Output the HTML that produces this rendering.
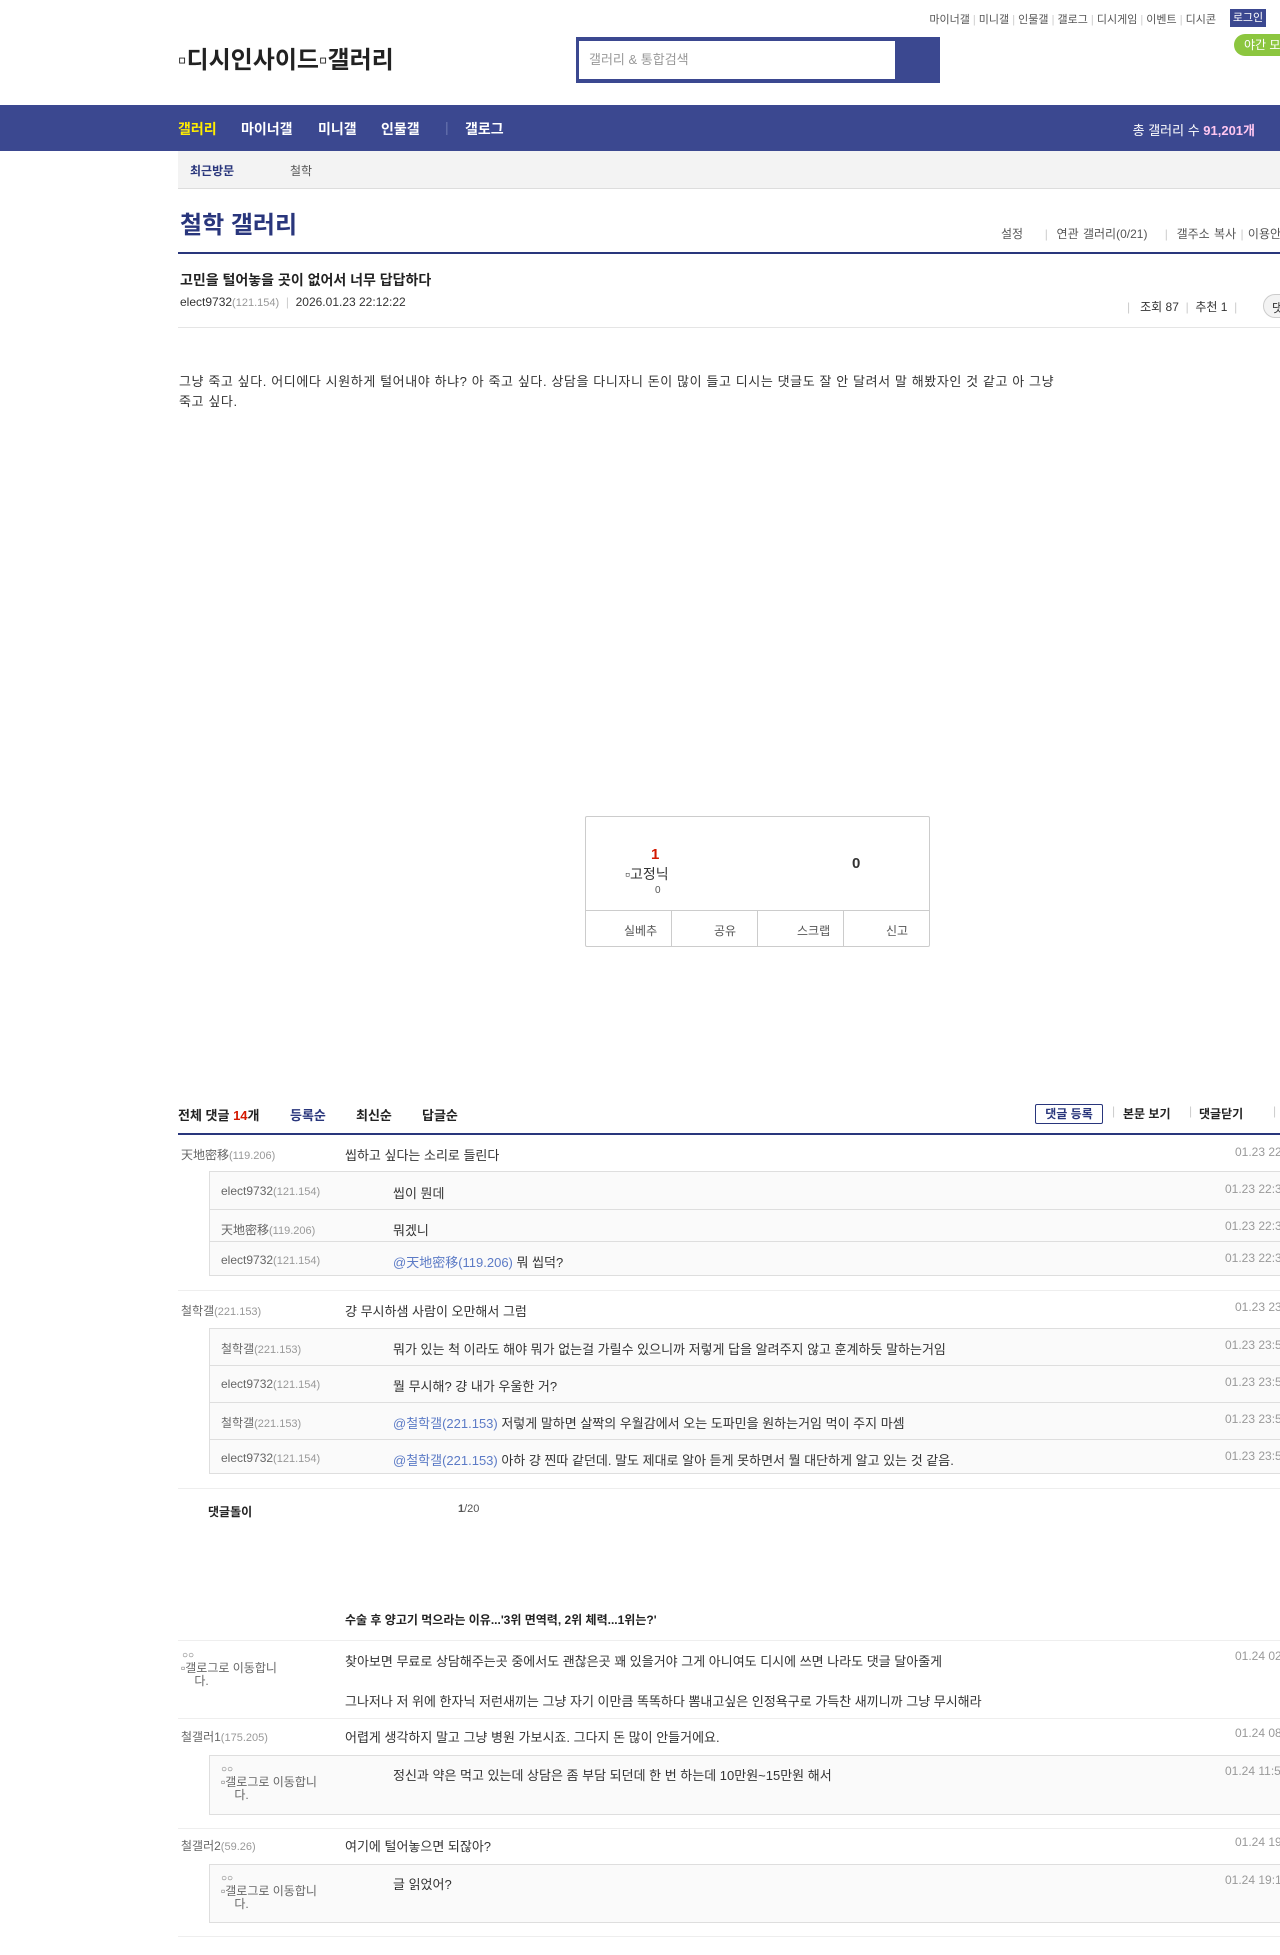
<!DOCTYPE html>
<html><head><meta charset="utf-8">
<style>
*{margin:0;padding:0;box-sizing:border-box}
body{width:1280px;height:1955px;overflow:hidden;background:#fff;font-family:"Liberation Sans","Noto Sans CJK KR",sans-serif;color:#333;position:relative;font-size:13px}
.a{position:absolute;white-space:nowrap}
.g{color:#999;font-size:11px}
.nm{color:#666;font-size:12px}
.dt{color:#999;font-size:12px}
.hl{position:absolute;height:1px;background:#e5e5e5}
.rb{position:absolute;left:209px;width:1080px;background:#fafafa;border:1px solid #dedede;border-right:none}
.rl{position:absolute;left:209px;width:1080px;height:1px;background:#dedede}
.lk{color:#5c7bc6}
.nv{position:absolute;top:119px;font-size:14px;font-weight:bold;color:#fff}
</style></head><body>
<div class="a" style="top:11px;right:64px;font-size:11px;color:#555">마이너갤 <span style="color:#ccc">|</span> 미니갤 <span style="color:#ccc">|</span> 인물갤 <span style="color:#ccc">|</span> 갤로그 <span style="color:#ccc">|</span> 디시게임 <span style="color:#ccc">|</span> 이벤트 <span style="color:#ccc">|</span> 디시콘</div>
<div class="a" style="left:1230px;top:9px;width:36px;height:18px;background:#3b4890;color:#fff;font-size:11px;text-align:center;line-height:18px">로그인</div>
<div class="a" style="left:1234px;top:34px;width:60px;height:22px;background:#8cc63f;border-radius:11px;color:#fff;font-size:12px;line-height:22px;padding-left:10px">야간 모드</div>
<div class="a" style="left:178px;top:40px;font-size:24px;color:#222;font-weight:bold">▫디시인사이드▫갤러리</div>
<div class="a" style="left:576px;top:37px;width:364px;height:46px;background:#3b4890"></div>
<div class="a" style="left:579px;top:41px;width:316px;height:38px;background:#fff;color:#999;font-size:13px;line-height:38px;padding-left:10px">갤러리 &amp; 통합검색</div>
<div class="a" style="left:0;top:105px;width:1280px;height:46px;background:#3b4890"></div>
<div class="nv" style="left:178px;color:#ffed00">갤러리</div>
<div class="nv" style="left:241px">마이너갤</div>
<div class="nv" style="left:318px">미니갤</div>
<div class="nv" style="left:381px">인물갤</div>
<div class="nv" style="left:445px;color:#6a76b0;font-weight:normal">|</div>
<div class="nv" style="left:465px">갤로그</div>
<div class="a" style="right:25px;top:120px;font-size:13px;color:#fff">총 갤러리 수 <b style="color:#ffc6f0">91,201개</b></div>
<div class="a" style="left:178px;top:151px;width:1102px;height:38px;background:#f3f3f3;border-bottom:1px solid #ddd"></div>
<div class="a" style="left:190px;top:162px;font-size:12px;color:#29367c;font-weight:bold">최근방문</div>
<div class="a" style="left:290px;top:162px;font-size:12px;color:#555">철학</div>
<div class="a" style="left:180px;top:205px;font-size:24px;font-weight:bold;color:#29367c">철학 갤러리</div>
<div class="a" style="left:1001px;top:225px;font-size:12px;color:#555;word-spacing:1px">설정&nbsp;&nbsp;&nbsp;&nbsp;&nbsp;<span style="color:#ccc">|</span>&nbsp; 연관 갤러리(0/21)&nbsp;&nbsp;&nbsp;&nbsp;<span style="color:#ccc">|</span>&nbsp; 갤주소 복사 <span style="color:#ccc">|</span> 이용안내</div>
<div class="a" style="left:178px;top:252px;width:1102px;height:2px;background:#29367c"></div>
<div class="a" style="left:180px;top:270px;font-size:14px;font-weight:bold;color:#222">고민을 털어놓을 곳이 없어서 너무 답답하다</div>
<div class="a" style="left:180px;top:295px;font-size:12px;color:#333">elect9732<span class="g">(121.154)</span> <span style="color:#ccc">&nbsp;|&nbsp;</span> 2026.01.23 22:12:22</div>
<div class="a" style="left:1127px;top:298px;font-size:12px;color:#333"><span style="color:#ccc">|</span>&nbsp;&nbsp; 조회 87 <span style="color:#ccc">&nbsp;|&nbsp;</span> 추천 1 <span style="color:#ccc">&nbsp;|</span></div>
<div class="a" style="left:1263px;top:294px;width:40px;height:24px;border:1px solid #ccc;border-radius:12px;background:#f3f3f3;font-size:12px;padding:4px 8px">댓</div>
<div class="hl" style="left:178px;top:327px;width:1102px"></div>
<div class="a" style="left:179px;top:372px;font-size:13px;line-height:20px;color:#333;letter-spacing:0.6px">그냥 죽고 싶다. 어디에다 시원하게 털어내야 하냐? 아 죽고 싶다. 상담을 다니자니 돈이 많이 들고 디시는 댓글도 잘 안 달려서 말 해봤자인 것 같고 아 그냥<br>죽고 싶다.</div>

<div class="a" style="left:585px;top:816px;width:345px;height:131px;border:1px solid #ccc;border-radius:2px"></div>
<div class="a" style="left:651px;top:846px;font-size:15px;font-weight:bold;color:#d31900">1</div>
<div class="a" style="left:625px;top:864px;font-size:14px;color:#333">▫고정닉</div>
<div class="a" style="left:655px;top:885px;font-size:10px;color:#555">0</div>
<div class="a" style="left:852px;top:855px;font-size:15px;font-weight:bold;color:#333">0</div>
<div class="a" style="left:586px;top:910px;width:343px;height:1px;background:#ccc"></div>
<div class="a" style="left:671px;top:911px;width:1px;height:36px;background:#ccc"></div>
<div class="a" style="left:757px;top:911px;width:1px;height:36px;background:#ccc"></div>
<div class="a" style="left:843px;top:911px;width:1px;height:36px;background:#ccc"></div>
<div class="a" style="left:624px;top:922px;font-size:12px;color:#555">실베추</div>
<div class="a" style="left:714px;top:922px;font-size:12px;color:#555">공유</div>
<div class="a" style="left:797px;top:922px;font-size:12px;color:#555">스크랩</div>
<div class="a" style="left:886px;top:922px;font-size:12px;color:#555">신고</div>

<div class="a" style="left:178px;top:1105px;font-size:13px;font-weight:bold;color:#222">전체 댓글 <span style="color:#d31900">14</span>개</div>
<div class="a" style="left:290px;top:1105px;font-size:13px;font-weight:bold;color:#29367c">등록순</div>
<div class="a" style="left:356px;top:1105px;font-size:13px;font-weight:bold;color:#222">최신순</div>
<div class="a" style="left:422px;top:1105px;font-size:13px;font-weight:bold;color:#222">답글순</div>
<div class="a" style="left:1035px;top:1104px;width:68px;height:20px;border:1px solid #29367c;border-radius:2px;font-size:12px;font-weight:bold;color:#29367c;text-align:center;line-height:18px">댓글 등록</div>
<div class="a" style="left:1112px;top:1104px;font-size:12px;color:#ccc">|</div>
<div class="a" style="left:1123px;top:1105px;font-size:12px;font-weight:bold;color:#222">본문 보기</div>
<div class="a" style="left:1189px;top:1104px;font-size:12px;color:#ccc">|</div>
<div class="a" style="left:1199px;top:1105px;font-size:12px;font-weight:bold;color:#222">댓글닫기</div>
<div class="a" style="left:1273px;top:1104px;font-size:12px;color:#ccc">|</div>
<div class="a" style="left:178px;top:1133px;width:1102px;height:2px;background:#29367c"></div>

<div class="a nm" style="left:181px;top:1146px">天地密移<span class="g">(119.206)</span></div>
<div class="a" style="left:345px;top:1145px">씹하고 싶다는 소리로 들린다</div>
<div class="a dt" style="left:1235px;top:1145px">01.23 22:12</div>
<div class="rb" style="top:1171px;height:105px"></div>
<div class="rl" style="top:1209px"></div><div class="rl" style="top:1241px"></div>
<div class="a nm" style="left:221px;top:1184px">elect9732<span class="g">(121.154)</span></div>
<div class="a" style="left:393px;top:1183px">씹이 뭔데</div>
<div class="a dt" style="left:1225px;top:1182px">01.23 22:30</div>
<div class="a nm" style="left:221px;top:1221px">天地密移<span class="g">(119.206)</span></div>
<div class="a" style="left:393px;top:1220px">뭐겠니</div>
<div class="a dt" style="left:1225px;top:1219px">01.23 22:31</div>
<div class="a nm" style="left:221px;top:1253px">elect9732<span class="g">(121.154)</span></div>
<div class="a" style="left:393px;top:1252px"><span class="lk">@天地密移(119.206)</span> 뭐 씹덕?</div>
<div class="a dt" style="left:1225px;top:1251px">01.23 22:32</div>
<div class="hl" style="left:178px;top:1290px;width:1102px;background:#eee"></div>

<div class="a nm" style="left:181px;top:1302px">철학갤<span class="g">(221.153)</span></div>
<div class="a" style="left:345px;top:1301px">걍 무시하샘 사람이 오만해서 그럼</div>
<div class="a dt" style="left:1235px;top:1300px">01.23 23:50</div>
<div class="rb" style="top:1328px;height:146px"></div>
<div class="rl" style="top:1365px"></div><div class="rl" style="top:1402px"></div><div class="rl" style="top:1439px"></div>
<div class="a nm" style="left:221px;top:1340px">철학갤<span class="g">(221.153)</span></div>
<div class="a" style="left:393px;top:1339px">뭐가 있는 척 이라도 해야 뭐가 없는걸 가릴수 있으니까 저렇게 답을 알려주지 않고 훈계하듯 말하는거임</div>
<div class="a dt" style="left:1225px;top:1338px">01.23 23:51</div>
<div class="a nm" style="left:221px;top:1377px">elect9732<span class="g">(121.154)</span></div>
<div class="a" style="left:393px;top:1376px">뭘 무시해? 걍 내가 우울한 거?</div>
<div class="a dt" style="left:1225px;top:1375px">01.23 23:52</div>
<div class="a nm" style="left:221px;top:1414px">철학갤<span class="g">(221.153)</span></div>
<div class="a" style="left:393px;top:1413px"><span class="lk">@철학갤(221.153)</span> 저렇게 말하면 살짝의 우월감에서 오는 도파민을 원하는거임 먹이 주지 마셈</div>
<div class="a dt" style="left:1225px;top:1412px">01.23 23:53</div>
<div class="a nm" style="left:221px;top:1451px">elect9732<span class="g">(121.154)</span></div>
<div class="a" style="left:393px;top:1450px"><span class="lk">@철학갤(221.153)</span> 아하 걍 찐따 같던데. 말도 제대로 알아 듣게 못하면서 뭘 대단하게 알고 있는 것 같음.</div>
<div class="a dt" style="left:1225px;top:1449px">01.23 23:54</div>
<div class="hl" style="left:178px;top:1488px;width:1102px;background:#eee"></div>
<div class="a" style="left:208px;top:1503px;font-size:12px;font-weight:bold;color:#222">댓글돌이</div>
<div class="a" style="left:458px;top:1503px;font-size:11px;color:#555"><b>1</b>/20</div>

<div class="a" style="left:345px;top:1611px;font-size:12px;font-weight:bold;color:#222">수술 후 양고기 먹으라는 이유...'3위 면역력, 2위 체력...1위는?'</div>
<div class="hl" style="left:178px;top:1640px;width:1102px;background:#eee"></div>
<div class="a" style="left:182px;top:1650px;font-size:10px;color:#666">○○</div>
<div class="a nm" style="left:181px;top:1662px;line-height:13px">▫갤로그로 이동합니<br>&nbsp;&nbsp;&nbsp;&nbsp;다.</div>
<div class="a" style="left:345px;top:1651px">찾아보면 무료로 상담해주는곳 중에서도 괜찮은곳 꽤 있을거야 그게 아니여도 디시에 쓰면 나라도 댓글 달아줄게</div>
<div class="a" style="left:345px;top:1691px">그나저나 저 위에 한자닉 저런새끼는 그냥 자기 이만큼 똑똑하다 뽐내고싶은 인정욕구로 가득찬 새끼니까 그냥 무시해라</div>
<div class="a dt" style="left:1235px;top:1649px">01.24 02:10</div>
<div class="hl" style="left:178px;top:1718px;width:1102px;background:#eee"></div>
<div class="a nm" style="left:181px;top:1728px">철갤러1<span class="g">(175.205)</span></div>
<div class="a" style="left:345px;top:1727px">어렵게 생각하지 말고 그냥 병원 가보시죠. 그다지 돈 많이 안들거에요.</div>
<div class="a dt" style="left:1235px;top:1726px">01.24 08:10</div>
<div class="rb" style="top:1755px;height:60px"></div>
<div class="a" style="left:221px;top:1764px;font-size:10px;color:#666">○○</div>
<div class="a nm" style="left:221px;top:1776px;line-height:13px">▫갤로그로 이동합니<br>&nbsp;&nbsp;&nbsp;&nbsp;다.</div>
<div class="a" style="left:393px;top:1765px">정신과 약은 먹고 있는데 상담은 좀 부담 되던데 한 번 하는데 10만원~15만원 해서</div>
<div class="a dt" style="left:1225px;top:1764px">01.24 11:50</div>
<div class="hl" style="left:178px;top:1828px;width:1102px;background:#eee"></div>
<div class="a nm" style="left:181px;top:1837px">철갤러2<span class="g">(59.26)</span></div>
<div class="a" style="left:345px;top:1836px">여기에 털어놓으면 되잖아?</div>
<div class="a dt" style="left:1235px;top:1835px">01.24 19:10</div>
<div class="rb" style="top:1864px;height:59px"></div>
<div class="a" style="left:221px;top:1873px;font-size:10px;color:#666">○○</div>
<div class="a nm" style="left:221px;top:1885px;line-height:13px">▫갤로그로 이동합니<br>&nbsp;&nbsp;&nbsp;&nbsp;다.</div>
<div class="a" style="left:393px;top:1874px">글 읽었어?</div>
<div class="a dt" style="left:1225px;top:1873px">01.24 19:15</div>
<div class="hl" style="left:178px;top:1936px;width:1102px;background:#eee"></div>
</body></html>
